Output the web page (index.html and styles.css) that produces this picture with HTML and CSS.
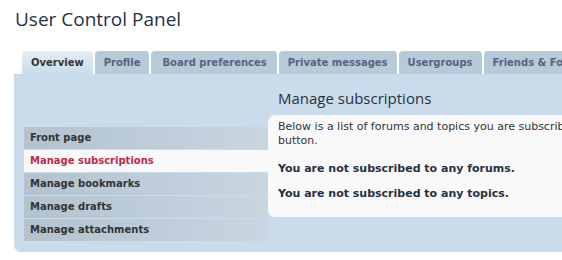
FILE: index.html
```html
<!DOCTYPE html>
<html lang="en">
<head>
  <meta charset="UTF-8" />
  <title>User Control Panel</title>
  <link rel="stylesheet" href="styles.css">
</head>
<body>
  <h2 class="page-title">User Control Panel</h2>

  <div class="tabs">
    <a href="#" class="tab active">Overview</a>
    <a href="#" class="tab">Profile</a>
    <a href="#" class="tab">Board preferences</a>
    <a href="#" class="tab">Private messages</a>
    <a href="#" class="tab">Usergroups</a>
    <a href="#" class="tab">Friends &amp; Foes</a>
  </div>

  <div class="panel">
    <div class="menu">
      <a href="#">Front page</a>
      <a href="#" class="current">Manage subscriptions</a>
      <a href="#">Manage bookmarks</a>
      <a href="#">Manage drafts</a>
      <a href="#">Manage attachments</a>
    </div>
    <div class="main">
      <h3>Manage subscriptions</h3>
      <div class="box">
        <p class="intro">Below is a list of forums and topics you are subscribed to. You will be notified of new posts in either. To unsubscribe mark the forum or topic and then press the unsubscribe<br>button.</p>
        <p class="strong">You are not subscribed to any forums.</p>
        <p class="strong">You are not subscribed to any topics.</p>
      </div>
    </div>
  </div>
</body>
</html>
```

FILE: styles.css
```css
html, body {
  overflow: hidden;
}
body {
  margin: 0;
  background: #fff;
  color: #333;
  font-family: "DejaVu Sans", Verdana, sans-serif;
  font-size: 11px;
  width: 720px;
}
.page-title {
  font-family: "Open Sans", sans-serif;
  font-weight: normal;
  font-size: 19px;
  color: #28313f;
  margin: 0;
  padding: 5px 0 0 15px;
  line-height: 28px;
}
.tabs {
  display: flex;
  gap: 2px;
  margin: 18px 0 0 22px;
}
.tab {
  display: block;
  height: 23px;
  line-height: 23px;
  padding: 0 9px;
  background: #b8c9d8;
  color: #536482;
  font-size: 10px;
  font-weight: bold;
  text-decoration: none;
  border-radius: 4px 4px 0 0;
  white-space: nowrap;
}
.tab:nth-child(3) {
  padding: 0 10px 0 11px;
}
.tab.active {
  background: linear-gradient(#e4edf4, #cadceb);
  color: #333;
}
.panel {
  display: flex;
  margin-left: 14px;
  background: #cadceb;
  border-radius: 0 0 0 7px;
  height: 178px;
}
.menu {
  flex: 0 0 244px;
  margin: 53px 0 0 10px;
}
.menu a {
  display: block;
  height: 22px;
  line-height: 22px;
  padding-left: 6px;
  margin-bottom: 1px;
  background: linear-gradient(to right, #b2c2cf, #c8d6e2);
  color: #333;
  font-size: 10px;
  font-weight: bold;
  text-decoration: none;
}
.menu a.current {
  background: #f9f9f9;
  color: #bc2a4d;
}
.main {
  flex: 1;
  min-width: 0;
  padding-top: 14px;
}
.main h3 {
  font-family: "Open Sans", sans-serif;
  font-weight: normal;
  font-size: 15px;
  color: #28313f;
  margin: 0 0 6px 10px;
  line-height: 21px;
}
.box {
  background: #f9f9f9;
  border-radius: 7px 0 0 7px;
  padding: 5px 10px 6px;
  height: 102px;
  box-sizing: border-box;
  overflow: hidden;
}
.box p {
  margin: 0 0 11px;
  line-height: 14px;
}
.box p.intro {
  white-space: nowrap;
  margin-bottom: 14px;
}
.box p.strong {
  font-weight: bold;
  color: #28313f;
}
```
